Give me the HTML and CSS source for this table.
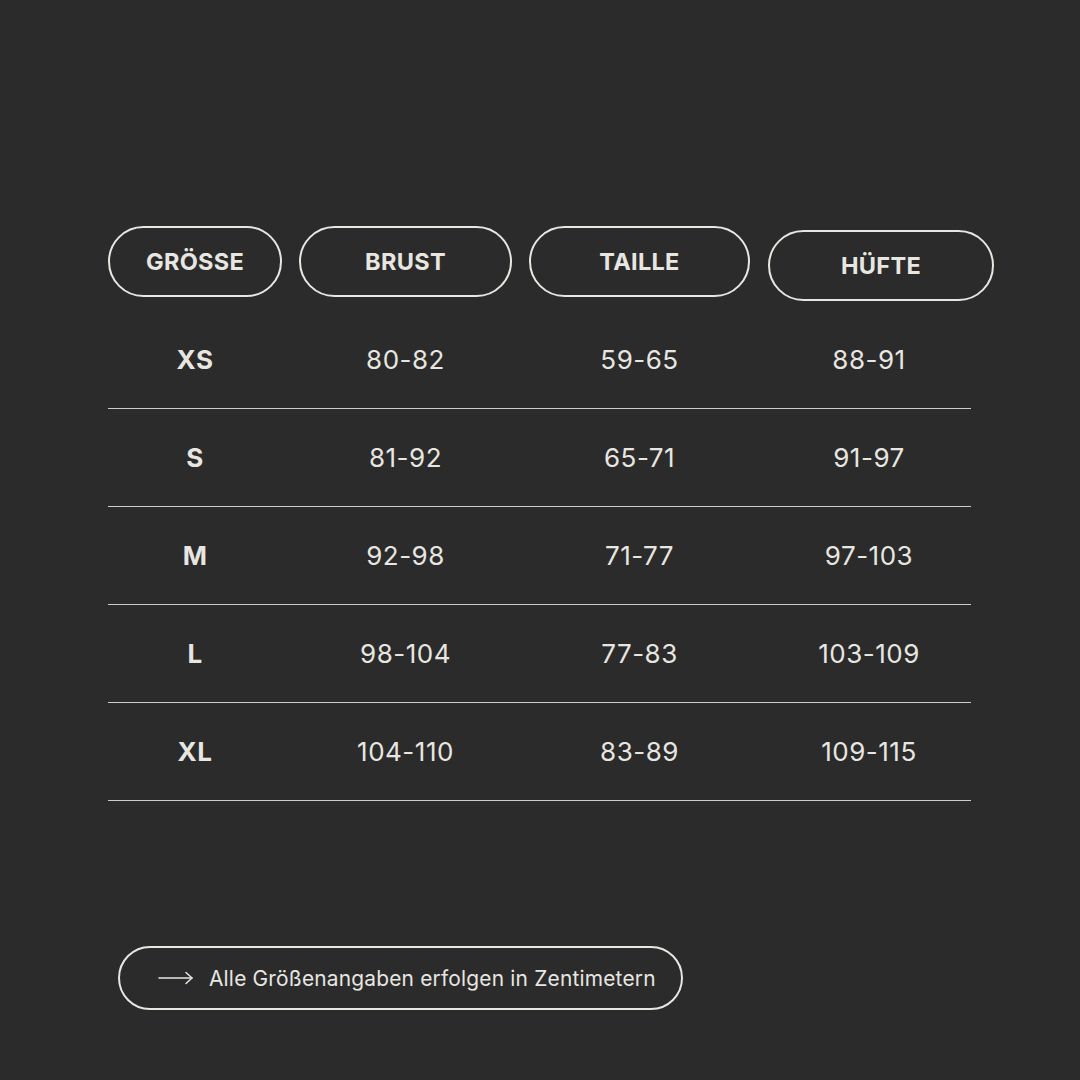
FILE: index.html
```html
<!DOCTYPE html>
<html lang="de">
<head>
<meta charset="utf-8">
<title>Größentabelle</title>
<link rel="stylesheet" href="styles.css">
</head>
<body>
<main class="page">
  <div class="head">
    <div class="pill pill-size">GRÖSSE</div>
    <div class="pill pill-brust">BRUST</div>
    <div class="pill pill-taille">TAILLE</div>
    <div class="pill pill-huefte">HÜFTE</div>
  </div>
  <div class="table">
    <div class="row"><span class="size">XS</span><span>80-82</span><span>59-65</span><span>88-91</span></div>
    <div class="row"><span class="size">S</span><span>81-92</span><span>65-71</span><span>91-97</span></div>
    <div class="row"><span class="size">M</span><span>92-98</span><span>71-77</span><span>97-103</span></div>
    <div class="row"><span class="size">L</span><span>98-104</span><span>77-83</span><span>103-109</span></div>
    <div class="row"><span class="size">XL</span><span>104-110</span><span>83-89</span><span>109-115</span></div>
  </div>
  <div class="note">
    <svg class="arrow" width="36" height="14" viewBox="0 0 36 14" fill="none" stroke="#e8e6e1" stroke-width="1.5" stroke-linecap="round" stroke-linejoin="round"><path d="M1 7H34"/><path d="M28 1.5L34 7L28 12.5"/></svg>
    <span>Alle Größenangaben erfolgen in Zentimetern</span>
  </div>
</main>
</body>
</html>
```
FILE: styles.css
```css
html, body {
  margin: 0;
  padding: 0;
  background: #2b2b2b;
}
body {
  width: 1080px;
  height: 1080px;
  color: #e8e6e1;
  font-family: Inter, "Noto Sans", "Liberation Sans", sans-serif;
}
.page {
  padding: 226px 0 0 108px;
}
.head {
  display: flex;
  align-items: flex-start;
  gap: 17px;
}
.pill {
  box-sizing: border-box;
  height: 71px;
  border: 2px solid #e8e6e1;
  border-radius: 36px;
  display: flex;
  align-items: center;
  justify-content: center;
  font-weight: 700;
  font-size: 23.5px;
  letter-spacing: 0.3px;
  padding-bottom: 1px;
}
.pill-size { width: 174px; }
.pill-brust { width: 213px; }
.pill-taille { width: 221px; }
.pill-huefte { width: 226px; margin-left: 1px; margin-top: 4px; }

.table {
  width: 863px;
  margin-top: 10px;
}
.row {
  display: grid;
  grid-template-columns: 174px 213px 221px 204px;
  column-gap: 17px;
  height: 98px;
  align-items: center;
  border-bottom: 1px solid #cfcdc8;
  box-sizing: border-box;
  font-size: 26px;
  letter-spacing: 0.5px;
}
.row span {
  text-align: center;
}
.row .size {
  font-weight: 700;
}
.note {
  box-sizing: border-box;
  margin: 145px 0 0 10px;
  width: 565px;
  height: 64px;
  border: 2px solid #e8e6e1;
  border-radius: 32px;
  display: flex;
  align-items: center;
  padding-left: 38px;
  gap: 15px;
  font-size: 20.9px;
  letter-spacing: 0.2px;
}
.arrow {
  flex: none;
}
```
